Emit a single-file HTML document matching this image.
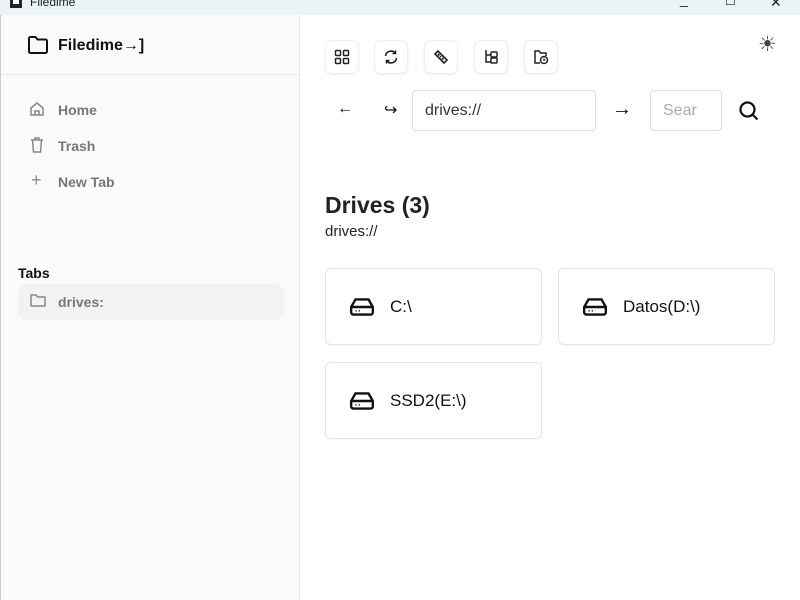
<!DOCTYPE html>
<html><head><meta charset="utf-8"><style>
*{box-sizing:border-box;margin:0;padding:0}
body{width:800px;height:600px;overflow:hidden;font-family:"Liberation Sans",sans-serif;background:#fff;position:relative;color:#111}
.tb{position:absolute;left:0;top:0;width:800px;height:15px;background:#eaf3f6}
.tb span{position:absolute;left:30px;top:-5px;font-size:12px;color:#222}
.side{position:absolute;left:0;top:15px;width:300px;height:585px;background:#f9fafb;border-right:1px solid #e5e7eb;border-left:1px solid #ccc}
.hd{height:60px;border-bottom:1px solid #e9eaec;position:relative}
.ab{position:absolute}
.nav{position:absolute;left:57px;font-size:14px;color:#777;font-weight:bold}
.ic{position:absolute}
.btn{position:absolute;top:40px;width:34px;height:34px;border:1px solid #eee;border-radius:7px;background:#fff;box-shadow:0 1px 2px rgba(0,0,0,.06)}
.btn svg{position:absolute;left:8px;top:8px}
.card{position:absolute;width:217px;height:77px;border:1px solid #e6e6e6;border-radius:6px;background:#fff;box-shadow:0 1px 2px rgba(0,0,0,.04)}
.card svg{position:absolute;left:23px;top:27px}
.card span{position:absolute;left:64px;top:28px;font-size:17px}
</style></head><body>
<div class="tb"><svg class="ab" style="left:10px;top:0" width="12" height="8"><rect x="0" y="0" width="12" height="8" fill="#222"/><rect x="3" y="0" width="6" height="4" fill="#fff"/></svg><span>Filedime</span>
<span style="left:680px;top:-9px;font-size:14px">_</span><span style="left:725px;top:-6px">☐</span><span style="left:770px;top:-6px;font-size:14px">✕</span></div>
<div class="side">
<div class="hd">
<svg class="ab" style="left:26px;top:20px" width="22" height="20" viewBox="0 0 22 20"><path d="M2 3.5a1.5 1.5 0 0 1 1.5-1.5h5l2 2.5h8a1.5 1.5 0 0 1 1.5 1.5v10.5a1.5 1.5 0 0 1-1.5 1.5h-15a1.5 1.5 0 0 1-1.5-1.5z" fill="none" stroke="#111" stroke-width="2" stroke-linejoin="round"/></svg>
<div class="ab" style="left:57px;top:22px;font-size:16px;font-weight:bold">Filedime→]</div>
</div>
<svg class="ic" style="left:28px;top:86px" width="16" height="16" viewBox="0 0 16 16" fill="none" stroke="#888" stroke-width="1.5"><path d="M2 7l6-5 6 5v7H2z"/><path d="M6 14v-4h4v4"/></svg>
<div class="nav" style="top:87px">Home</div>
<svg class="ic" style="left:29px;top:122px" width="14" height="16" viewBox="0 0 14 16" fill="none" stroke="#888" stroke-width="1.5"><path d="M1 3h12M5 3V1h4v2M2.5 3l1 12h7l1-12"/></svg>
<div class="nav" style="top:123px">Trash</div>
<div class="ic" style="left:30px;top:155px;font-size:18px;color:#888">+</div>
<div class="nav" style="top:159px">New Tab</div>
<div class="ab" style="left:17px;top:250px;font-size:14px;font-weight:bold">Tabs</div>
<div class="ab" style="left:17px;top:269px;width:266px;height:36px;background:#f1f2f4;border-radius:10px"></div>
<svg class="ic" style="left:29px;top:278px" width="16" height="14" viewBox="0 0 16 14" fill="none" stroke="#888" stroke-width="1.5"><path d="M1 2h5l1.5 2H15v9H1z" stroke-linejoin="round"/></svg>
<div class="nav" style="top:279px">drives:</div>
</div>
<div class="btn" style="left:325px"><svg width="16" height="16" viewBox="0 0 16 16" fill="none" stroke="#222" stroke-width="1.5"><rect x="1.5" y="1.5" width="5" height="5" rx="1"/><rect x="9.5" y="1.5" width="5" height="5" rx="1"/><rect x="1.5" y="9.5" width="5" height="5" rx="1"/><rect x="9.5" y="9.5" width="5" height="5" rx="1"/></svg></div>
<div class="btn" style="left:374px"><svg width="16" height="16" viewBox="0 0 16 16" fill="none" stroke="#222" stroke-width="1.6"><path d="M2.5 7a5.5 5.5 0 0 1 10-2.5M13.5 9a5.5 5.5 0 0 1-10 2.5M12.5 1.5v3h-3M3.5 14.5v-3h3"/></svg></div>
<div class="btn" style="left:424px"><svg width="16" height="16" viewBox="0 0 16 16" fill="none" stroke="#222" stroke-width="1.6"><path d="M2 5l3-3 9 9-3 3z M5 5l1.5 1.5M7 7l1 1M9 9l1.5 1.5"/></svg></div>
<div class="btn" style="left:474px"><svg width="16" height="16" viewBox="0 0 16 16" fill="none" stroke="#222" stroke-width="1.5"><path d="M3 1v12h5M3 6h5"/><rect x="8" y="3" width="6" height="5" rx="1"/><rect x="8" y="9" width="6" height="5" rx="1"/></svg></div>
<div class="btn" style="left:524px"><svg width="16" height="16" viewBox="0 0 16 16" fill="none" stroke="#222" stroke-width="1.5"><path d="M7 14H2V2h4l1.5 2H13v3"/><circle cx="11" cy="11" r="3.5"/><path d="M11 9.5V11h1.2"/></svg></div>
<div class="ab" style="left:758px;top:32px;font-size:21px;color:#444">☀</div>
<div class="ab" style="left:337px;top:100px;font-size:16px">←</div>
<div class="ab" style="left:384px;top:100px;font-size:16px">↪</div>
<div class="ab" style="left:412px;top:90px;width:184px;height:41px;border:1px solid #ddd;border-radius:4px;font-size:16px;padding:11px 12px;color:#333">drives://</div>
<div class="ab" style="left:612px;top:98px;font-size:20px">→</div>
<div class="ab" style="left:650px;top:90px;width:72px;height:41px;border:1px solid #ddd;border-radius:4px;font-size:16px;padding:11px 12px;color:#aaa;overflow:hidden;white-space:nowrap">Sear</div>
<svg class="ab" style="left:738px;top:100px" width="22" height="22" viewBox="0 0 22 22" fill="none" stroke="#111" stroke-width="2.2"><circle cx="9.5" cy="9.5" r="7"/><path d="M14.5 14.5l5 5"/></svg>
<div class="ab" style="left:325px;top:192px;font-size:23px;font-weight:bold;color:#222">Drives (3)</div>
<div class="ab" style="left:325px;top:223px;font-size:15px;color:#222">drives://</div>
<div class="card" style="left:325px;top:268px"><svg width="26" height="22" viewBox="0 0 24 20" fill="none" stroke="#111" stroke-width="2.2"><path d="M2 10l4-7h12l4 7v5a2 2 0 0 1-2 2H4a2 2 0 0 1-2-2z M2 10h20"/><path d="M6 13.5h1M9 13.5h1" stroke-width="1.5"/></svg><span>C:\</span></div>
<div class="card" style="left:558px;top:268px"><svg width="26" height="22" viewBox="0 0 24 20" fill="none" stroke="#111" stroke-width="2.2"><path d="M2 10l4-7h12l4 7v5a2 2 0 0 1-2 2H4a2 2 0 0 1-2-2z M2 10h20"/><path d="M6 13.5h1M9 13.5h1" stroke-width="1.5"/></svg><span>Datos(D:\)</span></div>
<div class="card" style="left:325px;top:362px"><svg width="26" height="22" viewBox="0 0 24 20" fill="none" stroke="#111" stroke-width="2.2"><path d="M2 10l4-7h12l4 7v5a2 2 0 0 1-2 2H4a2 2 0 0 1-2-2z M2 10h20"/><path d="M6 13.5h1M9 13.5h1" stroke-width="1.5"/></svg><span>SSD2(E:\)</span></div>
</body></html>
